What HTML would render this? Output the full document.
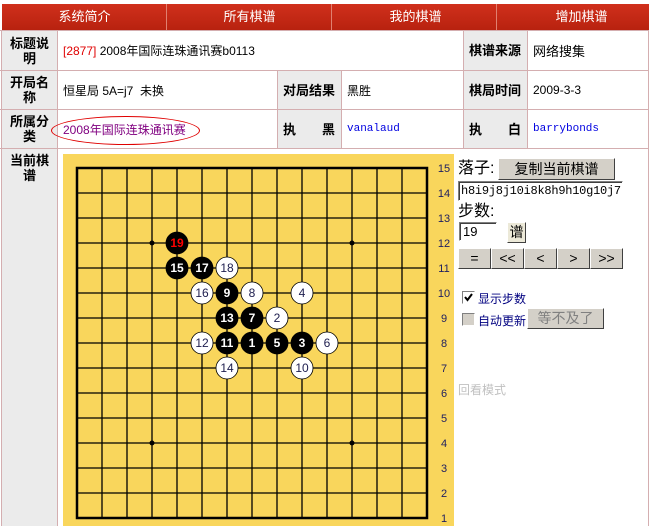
<!DOCTYPE html>
<html><head><meta charset="utf-8"><style>
*{margin:0;padding:0;box-sizing:border-box}
body{width:649px;height:526px;background:#fff;position:relative;overflow:hidden;font-family:"Liberation Sans","Noto Sans CJK SC",sans-serif;font-size:12px;color:#000}
.a{position:absolute}
.nav{left:2px;top:4px;width:647px;height:26px;background:linear-gradient(#d0301c,#b8220f);}
.nav div{position:absolute;top:0;height:26px;line-height:26px;color:#fff;font-size:13px;text-align:center;width:165px}
.sep{position:absolute;top:4px;width:1px;height:26px;background:#e08070}
.lab{background:#ebebeb;font-weight:bold;font-size:13px;text-align:center;line-height:15px;display:flex;align-items:center;justify-content:center}
.hl{position:absolute;height:1px;background:#d4aeb0}
.vl{position:absolute;width:1px;background:#d4aeb0}
.t{display:flex;align-items:center;font-size:12px}
.btn{position:absolute;background:#d4d0c8;border:1px solid;border-color:#fff #404040 #404040 #fff;text-align:center;font-size:14px;line-height:18px}
</style></head><body>
<div class="a nav"></div>
<div class="a" style="left:0;top:0;width:649px;height:4px;background:#fff"></div>
<div class="nav a" style="background:none">
<div style="left:0">系统简介</div><div style="left:165px">所有棋谱</div><div style="left:331px">我的棋谱</div><div style="left:497px">增加棋谱</div></div>
<div class="sep" style="left:166px"></div><div class="sep" style="left:331px"></div><div class="sep" style="left:496px"></div>

<div class="a lab" style="left:2px;top:31px;width:55px;height:39px">标题说<br>明</div>
<div class="a lab" style="left:2px;top:71px;width:55px;height:38px">开局名<br>称</div>
<div class="a lab" style="left:2px;top:110px;width:55px;height:38px">所属分<br>类</div>
<div class="a lab" style="left:2px;top:149px;width:55px;height:34px;align-items:flex-start;padding-top:4px">当前棋<br>谱</div>
<div class="a" style="left:2px;top:183px;width:55px;height:343px;background:#ebebeb"></div>
<div class="a lab" style="left:463px;top:31px;width:64px;height:39px">棋谱来源</div>
<div class="a lab" style="left:277px;top:71px;width:64px;height:38px">对局结果</div>
<div class="a lab" style="left:463px;top:71px;width:64px;height:38px">棋局时间</div>
<div class="a lab" style="left:277px;top:110px;width:64px;height:38px;justify-content:space-between;padding:0 6px">执<span>黑</span></div>
<div class="a lab" style="left:463px;top:110px;width:64px;height:38px;justify-content:space-between;padding:0 6px">执<span>白</span></div>

<div class="hl" style="left:0;top:30px;width:649px"></div>
<div class="hl" style="left:0;top:70px;width:649px"></div>
<div class="hl" style="left:0;top:109px;width:649px"></div>
<div class="hl" style="left:0;top:148px;width:649px"></div>
<div class="vl" style="left:1px;top:30px;height:496px"></div>
<div class="vl" style="left:57px;top:30px;height:496px"></div>
<div class="vl" style="left:277px;top:70px;height:78px"></div>
<div class="vl" style="left:341px;top:70px;height:78px"></div>
<div class="vl" style="left:463px;top:30px;height:118px"></div>
<div class="vl" style="left:527px;top:30px;height:118px"></div>
<div class="vl" style="left:648px;top:30px;height:496px"></div>

<div class="a t" style="left:63px;top:31px;height:39px"><span style="color:#e00000">[2877]</span>&nbsp;2008年国际连珠通讯赛b0113</div>
<div class="a t" style="left:533px;top:31px;height:39px;font-size:13px">网络搜集</div>
<div class="a t" style="left:63px;top:71px;height:38px">恒星局 5A=j7 &nbsp;未换</div>
<div class="a t" style="left:347px;top:71px;height:38px">黑胜</div>
<div class="a t" style="left:533px;top:71px;height:38px">2009-3-3</div>
<div class="a t" style="left:63px;top:110px;height:38px;color:#800080">2008年国际连珠通讯赛</div>
<div class="a" style="left:51px;top:116px;width:149px;height:29px;border:1px solid #e00000;border-radius:50%"></div>
<div class="a t" style="left:347px;top:110px;height:38px;color:#0000e0;font-family:'Liberation Mono',monospace;font-size:11px">vanalaud</div>
<div class="a t" style="left:533px;top:110px;height:38px;color:#0000e0;font-family:'Liberation Mono',monospace;font-size:11px">barrybonds</div>

<svg class="a" style="left:63px;top:154px" width="391" height="372" viewBox="63 154 391 372">
<rect x="63" y="154" width="391" height="372" fill="#f9d65c"/>
<g stroke="#000" stroke-width="1.3">
<line x1="77" y1="193" x2="427" y2="193"/><line x1="77" y1="218" x2="427" y2="218"/><line x1="77" y1="243" x2="427" y2="243"/><line x1="77" y1="268" x2="427" y2="268"/><line x1="77" y1="293" x2="427" y2="293"/><line x1="77" y1="318" x2="427" y2="318"/><line x1="77" y1="343" x2="427" y2="343"/><line x1="77" y1="368" x2="427" y2="368"/><line x1="77" y1="393" x2="427" y2="393"/><line x1="77" y1="418" x2="427" y2="418"/><line x1="77" y1="443" x2="427" y2="443"/><line x1="77" y1="468" x2="427" y2="468"/><line x1="77" y1="493" x2="427" y2="493"/>
<line x1="102" y1="168" x2="102" y2="518"/><line x1="127" y1="168" x2="127" y2="518"/><line x1="152" y1="168" x2="152" y2="518"/><line x1="177" y1="168" x2="177" y2="518"/><line x1="202" y1="168" x2="202" y2="518"/><line x1="227" y1="168" x2="227" y2="518"/><line x1="252" y1="168" x2="252" y2="518"/><line x1="277" y1="168" x2="277" y2="518"/><line x1="302" y1="168" x2="302" y2="518"/><line x1="327" y1="168" x2="327" y2="518"/><line x1="352" y1="168" x2="352" y2="518"/><line x1="377" y1="168" x2="377" y2="518"/><line x1="402" y1="168" x2="402" y2="518"/>
</g>
<rect x="77" y="168" width="350" height="350" fill="none" stroke="#000" stroke-width="2.5"/>
<g fill="#000"><circle cx="152" cy="243" r="2.5"/><circle cx="352" cy="243" r="2.5"/><circle cx="152" cy="443" r="2.5"/><circle cx="352" cy="443" r="2.5"/></g>
<g font-family="Liberation Sans,sans-serif" font-size="12" font-weight="bold" text-anchor="middle">
<g stroke="#000" stroke-width="0.8">
<circle cx="177" cy="243" r="11" fill="#000"/>
<circle cx="177" cy="268" r="11" fill="#000"/><circle cx="202" cy="268" r="11" fill="#000"/><circle cx="227" cy="268" r="11" fill="#fff"/>
<circle cx="202" cy="293" r="11" fill="#fff"/><circle cx="227" cy="293" r="11" fill="#000"/><circle cx="252" cy="293" r="11" fill="#fff"/><circle cx="302" cy="293" r="11" fill="#fff"/>
<circle cx="227" cy="318" r="11" fill="#000"/><circle cx="252" cy="318" r="11" fill="#000"/><circle cx="277" cy="318" r="11" fill="#fff"/>
<circle cx="202" cy="343" r="11" fill="#fff"/><circle cx="227" cy="343" r="11" fill="#000"/><circle cx="252" cy="343" r="11" fill="#000"/><circle cx="277" cy="343" r="11" fill="#000"/><circle cx="302" cy="343" r="11" fill="#000"/><circle cx="327" cy="343" r="11" fill="#fff"/>
<circle cx="227" cy="368" r="11" fill="#fff"/><circle cx="302" cy="368" r="11" fill="#fff"/>
</g>
<text x="177" y="247" fill="#f00">19</text>
<g fill="#fff"><text x="177" y="272">15</text><text x="202" y="272">17</text><text x="227" y="297">9</text><text x="227" y="322">13</text><text x="252" y="322">7</text><text x="227" y="347">11</text><text x="252" y="347">1</text><text x="277" y="347">5</text><text x="302" y="347">3</text></g>
<g fill="#202050" font-weight="normal"><text x="227" y="272">18</text><text x="202" y="297">16</text><text x="252" y="297">8</text><text x="302" y="297">4</text><text x="277" y="322">2</text><text x="202" y="347">12</text><text x="327" y="347">6</text><text x="227" y="372">14</text><text x="302" y="372">10</text></g>
</g>
<g font-family="Liberation Sans,sans-serif" font-size="11" fill="#202060" text-anchor="middle">
<text x="444" y="172">15</text><text x="444" y="197">14</text><text x="444" y="222">13</text><text x="444" y="247">12</text><text x="444" y="272">11</text><text x="444" y="297">10</text><text x="444" y="322">9</text><text x="444" y="347">8</text><text x="444" y="372">7</text><text x="444" y="397">6</text><text x="444" y="422">5</text><text x="444" y="447">4</text><text x="444" y="472">3</text><text x="444" y="497">2</text><text x="444" y="522">1</text>
</g>
</svg>

<div class="a" style="left:458px;top:158px;font-size:16px;line-height:22px">落子:</div>
<div class="btn" style="left:498px;top:158px;width:117px;height:22px;line-height:20px">复制当前棋谱</div>
<div class="a" style="left:458px;top:181px;width:165px;height:20px;border:1px solid;border-color:#808080 #fff #fff #808080;box-shadow:inset 1px 1px 0 #404040;font-family:'Liberation Mono',monospace;font-size:12px;letter-spacing:-0.25px;line-height:18px;padding-left:2px;overflow:hidden;white-space:nowrap">h8i9j8j10i8k8h9h10g10j7</div>
<div class="a" style="left:458px;top:201px;font-size:16px;line-height:22px">步数:</div>
<div class="a" style="left:459px;top:222px;width:38px;height:19px;border:1px solid;border-color:#808080 #fff #fff #808080;box-shadow:inset 1px 1px 0 #404040;font-size:13px;line-height:17px;padding-left:3px">19</div>
<div class="btn" style="left:507px;top:222px;width:19px;height:21px;background:#ece9d8">谱</div>
<div class="btn" style="left:458px;top:248px;width:33px;height:21px">=</div>
<div class="btn" style="left:491px;top:248px;width:33px;height:21px">&lt;&lt;</div>
<div class="btn" style="left:524px;top:248px;width:33px;height:21px">&lt;</div>
<div class="btn" style="left:557px;top:248px;width:33px;height:21px">&gt;</div>
<div class="btn" style="left:590px;top:248px;width:33px;height:21px">&gt;&gt;</div>
<div class="a" style="left:462px;top:291px;width:13px;height:13px;border:1px solid;border-color:#808080 #fff #fff #808080;background:#fff"><svg width="11" height="11" style="position:absolute;left:0;top:0"><path d="M2 5 L4.5 8 L9 2" stroke="#000" stroke-width="2" fill="none"/></svg></div>
<div class="a" style="left:478px;top:290px;font-size:12px;color:#000080">显示步数</div>
<div class="a" style="left:462px;top:313px;width:13px;height:13px;border:1px solid;border-color:#808080 #fff #fff #808080;background:#d4d0c8"></div>
<div class="a" style="left:478px;top:312px;font-size:12px;color:#000080">自动更新</div>
<div class="btn" style="left:527px;top:308px;width:77px;height:21px;color:#808080">等不及了</div>
<div class="a" style="left:458px;top:381px;font-size:12px;color:#c0c0c0">回看模式</div>
</body></html>
